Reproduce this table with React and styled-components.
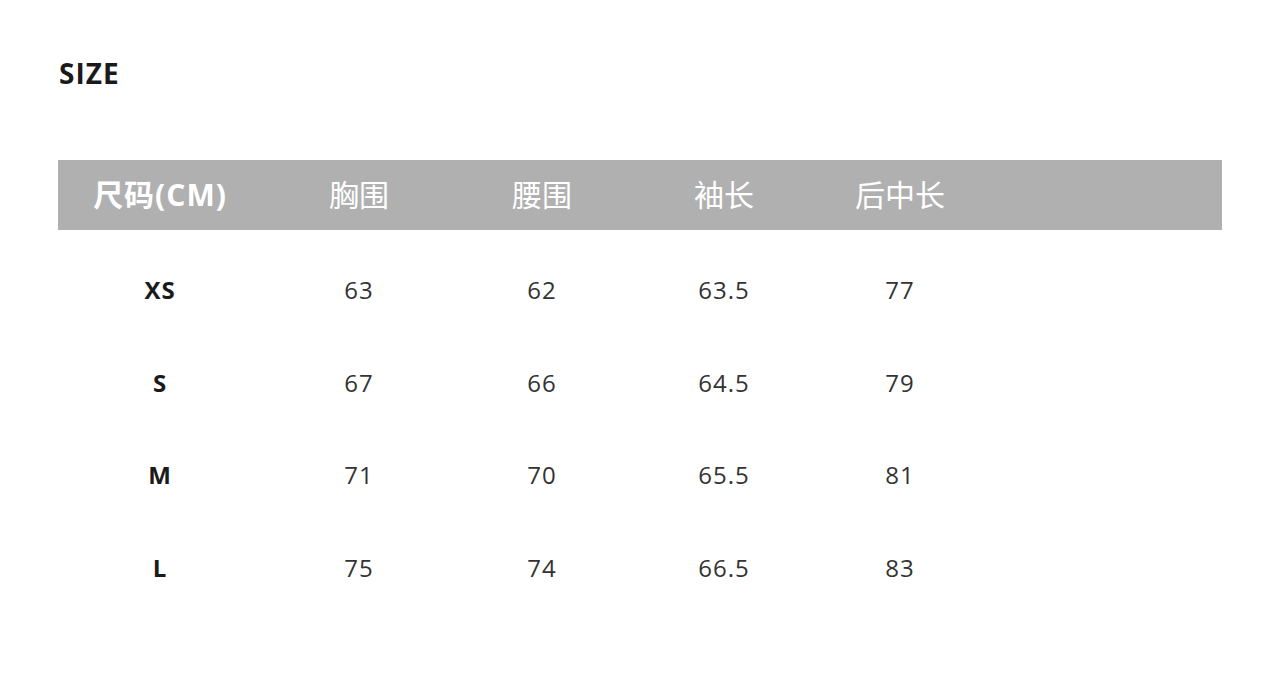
import styled, { createGlobalStyle } from 'styled-components';

const GlobalStyle = createGlobalStyle`
  html, body {
    margin: 0;
    padding: 0;
    background: #ffffff;
  }
  body {
    font-family: "Open Sans", "Noto Sans CJK SC", sans-serif;
  }
`;

const columns = ['尺码(CM)', '胸围', '腰围', '袖长', '后中长'];

const rows = [
  { size: 'XS', values: ['63', '62', '63.5', '77'] },
  { size: 'S', values: ['67', '66', '64.5', '79'] },
  { size: 'M', values: ['71', '70', '65.5', '81'] },
  { size: 'L', values: ['75', '74', '66.5', '83'] },
];

function App() {
  return (
    <Page>
      <GlobalStyle />
      <Title>SIZE</Title>
      <Table>
        <HeadRow>
          {columns.map((col, i) => (
            <HeadCell key={col} $first={i === 0}>{col}</HeadCell>
          ))}
        </HeadRow>
        <Body>
          {rows.map((row) => (
            <Row key={row.size}>
              <SizeCell>{row.size}</SizeCell>
              {row.values.map((v, i) => (
                <Cell key={i}>{v}</Cell>
              ))}
            </Row>
          ))}
        </Body>
      </Table>
    </Page>
  );
}

const Page = styled.main`
  width: 1280px;
  height: 674px;
  box-sizing: border-box;
  padding: 55px 58px 0 58px;
  display: flex;
  flex-direction: column;
`;

const Title = styled.h1`
  margin: 0 0 0 1px;
  font-size: 28px;
  font-weight: 700;
  color: #1a1a1a;
  line-height: 36px;
  letter-spacing: 1px;
`;

const Table = styled.section`
  margin-top: 69px;
  display: flex;
  flex-direction: column;
`;

const gridCols = '204px 194px 172px 192px 160px 1fr';

const HeadRow = styled.div`
  display: grid;
  grid-template-columns: ${gridCols};
  height: 70px;
  align-items: center;
  background: #b0b0b0;
`;

const HeadCell = styled.div`
  text-align: center;
  color: #ffffff;
  font-size: 30px;
  font-weight: ${(p) => (p.$first ? 700 : 400)};
  letter-spacing: ${(p) => (p.$first ? '1px' : '0')};
  line-height: 1;
`;

const Body = styled.div`
  margin-top: 14px;
  display: flex;
  flex-direction: column;
`;

const Row = styled.div`
  display: grid;
  grid-template-columns: ${gridCols};
  height: 92.5px;
  align-items: center;
`;

const Cell = styled.div`
  text-align: center;
  color: #333333;
  font-size: 24px;
  letter-spacing: 1px;
  line-height: 1;
`;

const SizeCell = styled(Cell)`
  font-weight: 700;
  color: #1a1a1a;
`;

export default App;
